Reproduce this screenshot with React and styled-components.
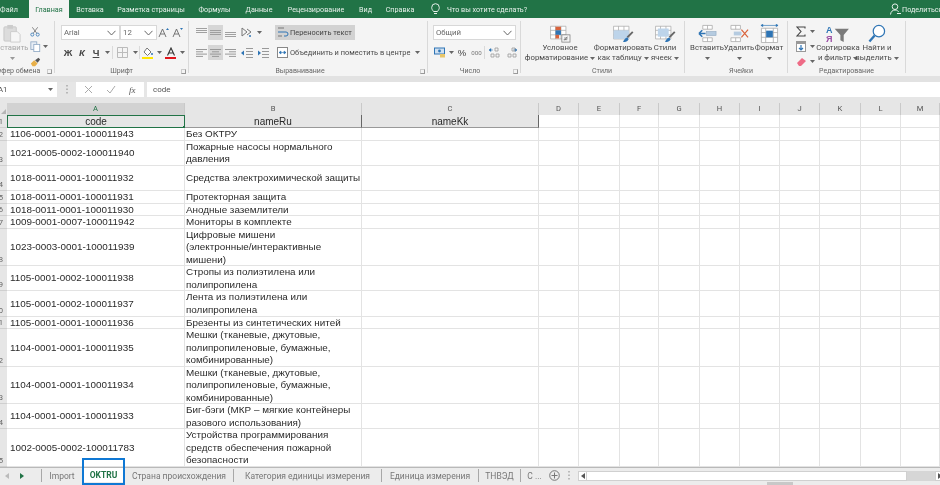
import React from "react";
import styled, { createGlobalStyle } from "styled-components";

const Global = createGlobalStyle`
  html, body { margin: 0; padding: 0; background: #fff; overflow: hidden; }
  * { box-sizing: border-box; }
`;
const UI = `Roboto, "Open Sans", "Liberation Sans", sans-serif`;
const SHEET = `"Liberation Sans", Arial, sans-serif`;

const Shell = styled.div`
  width: 940px; height: 485px; overflow: hidden; display: flex; flex-direction: column;
  background: #fff; font-family: ${UI}; filter: blur(0.3px);
`;
const TitleBar = styled.div`
  height: 18px; flex: none; background: #217346; display: flex; align-items: center; color: #e6f0ea; font-size: 7.2px;
`;
const MenuTab = styled.div`
  height: 18px; flex: none; display: flex; align-items: center; justify-content: center; white-space: nowrap; width: ${p => p.$w}px;
  margin-right: ${p => p.$mr || 0}px;
  ${p => p.$active && `background:#f4f4f4;color:#217346;`}
`;
const Tell = styled.div`display:flex;align-items:center;gap:7px;margin-left:10px;width:459px;flex:none;`;
const Share = styled.div`display:flex;align-items:center;gap:1px;white-space:nowrap;`;

const Ribbon = styled.div`
  height: 58px; flex: none; background: #f4f4f4; display: flex; color: #4a4a4a; font-size: 7.8px; overflow: hidden;
`;
const Group = styled.div`
  width: ${p => p.$w}px; flex: none; height: 52px; margin-top: 3px; border-right: 1px solid #d9d9d9;
  display: flex; flex-direction: column; position: relative;
`;
const GroupBody = styled.div`
  height: 42px; flex: none; padding: ${p => p.$top ?? 4}px 0 0 ${p => p.$pad || 0}px; display: flex;
`;
const GroupLabel = styled.div`
  height: 10px; margin-top: 3px; line-height: 10px; font-size: 7px; color: #666; white-space: nowrap; text-align: center;
  width: ${p => p.$w ? p.$w + "px" : "100%"}; margin-left: ${p => p.$ml || 0}px; flex: none;
`;
const Launcher = styled.span`
  position: absolute; right: 2px; bottom: -1px; width: 5px; height: 5px; border: 1px solid #999; border-top-color:#ccc; border-left-color:#ccc;
`;
const Stack = styled.div`display:flex;flex-direction:column;gap:${p => p.$gap ?? 5}px;margin-top:${p => p.$mt || 0}px;`;
const Line = styled.div`display:flex;align-items:center;height:15px;`;
const Slot = styled.div`
  width: ${p => p.$w}px; height: 15px; flex: none; display: flex; align-items: center; justify-content: center;
  ${p => p.$on && `background:#d6d6d6;`}
`;
const Letter = styled(Slot)`
  font-family: ${SHEET}; font-weight: ${p => p.$bold ? 700 : 400}; font-size: 9.5px; color: #444; font-style: ${p => p.$it ? "italic" : "normal"};
  text-decoration: ${p => p.$un ? "underline" : "none"};
`;
const Thousands = styled(Slot)`font-size: 6.2px; color: #777;`;
const Divider = styled.span`width:1px;height:13px;background:#dadada;flex:none;`;
const Select = styled.div`
  width: ${p => p.$w}px; height: 15px; flex: none; background: #fff; border: 1px solid #d8d8d8;
  display: flex; align-items: center; justify-content: space-between; padding: 0 3px 0 2px; font-size: 7.8px; color: #666;
`;
const WrapBtn = styled.div`
  width: 80px; height: 15px; flex: none; background: #d2d2d2; display: flex; align-items: center; gap: 1px; padding-left: 3px; white-space: nowrap; color: #444; font-size: 7.4px;
`;
const MergeBtn = styled.div`display:flex;align-items:center;gap:2px;height:15px;white-space:nowrap;font-size:7.45px;`;
const PasteCol = styled.div`
  width: 30px; margin-left: -3px; flex: none; display: flex; flex-direction: column; align-items: center; color: #a8a8a8; font-size: 7.6px; line-height: 10px; white-space: nowrap;
`;
const Big = styled.div`
  width: ${p => p.$w}px; flex: none; display: flex; flex-direction: column; align-items: center; text-align: center; line-height: 10px; white-space: nowrap;
`;
const BigIcon = styled.div`height: 19px; display:flex;align-items:center;justify-content:center;flex:none;`;
const CaretLine = styled.div`height:10px;display:flex;align-items:center;justify-content:center;gap:2px;`;

const Band = styled.div`height: 6px; flex: none; background: #e2e2e2;`;
const FormulaBar = styled.div`
  height: 21px; flex: none; background: #e6e6e6; display: flex; padding-bottom: 6px; color: #555; font-size: 7.8px;
`;
const NameBox = styled.div`
  width: 57px; background: #fff; display: flex; align-items: center; justify-content: space-between; padding: 0 4px 0 0; text-indent: -2px;
`;
const Dots = styled.div`width: 19px; display:flex; align-items:center; justify-content:center;`;
const FxBox = styled.div`
  width: 68px; background: #fff; display: flex; align-items: center; justify-content: space-around; padding: 0 2px; margin-right: 3px; color:#555;
`;
const FxText = styled.span`font-family:"Liberation Serif",serif;font-style:italic;font-size:9px;`;
const FormulaInput = styled.div`flex:1;background:#fff;display:flex;align-items:center;padding-left:6px;font-size:8px;`;

const COLS = "7px 178px 177px 177px 40px 41px 39px 41px 40px 40px 40px 41px 40px 39px";
const Sheet = styled.div`flex: 1; overflow: hidden; background: #fff; font-family: ${SHEET}; color: #2a2a2a;`;
const ColHeader = styled.div`
  display: grid; grid-template-columns: ${COLS}; height: 12px; background: #e6e6e6; font-size: 7.6px; color: #555; font-family:${UI};
`;
const ColCell = styled.div`
  display: flex; align-items: center; justify-content: center; border-right: 1px solid #c9c9c9; line-height: 12px;
  ${p => p.$sel && `background:#d2d2d2;color:#217346;`}
`;
const Corner = styled.div`position:relative;overflow:hidden;&::after{content:"";position:absolute;right:1px;bottom:1px;border-style:solid;border-width:0 0 5px 5px;border-color:transparent transparent #b5b5b5 transparent;}`;
const Row = styled.div`
  display: grid; grid-template-columns: ${COLS}; height: ${p => p.$h}px; overflow: hidden;
`;
const RowNum = styled.div`
  background: #e6e6e6; font-size: 7.6px; font-family:${UI}; color: #666; display: flex; align-items: flex-end; justify-content: flex-end;
  line-height: 10px; overflow: hidden; border-bottom: 1px solid #cfcfcf; padding-right: 4px;
`;
const Cell = styled.div`
  border-right: 1px solid #e3e3e3; border-bottom: 1px solid #e3e3e3; font-size: 9.9px; line-height: 12.5px;
  display: flex; align-items: center; padding-left: ${p => p.$pad}px; padding-top: 1px; white-space: pre-line; overflow: hidden;
`;
const HeadCell = styled.div`
  background: #e6e6e6; border-right: 1px solid #666; border-bottom: 1px solid #999; font-size: 10px; display: flex; align-items: center; justify-content: center; position:relative;
  ${p => p.$sel && `border:1px solid #217346;&::after{content:"";position:absolute;right:-2px;bottom:-2px;width:3px;height:3px;background:#217346;}`}
`;

const SheetBar = styled.div`
  height: 18px; flex: none; background: #ececec; border-top: 1px solid #b9b9b9; display: flex; color: #777; font-size: 8.5px; position: relative;
`;
const Nav = styled.div`width: 42px; flex: none; height: 13px; display: flex; align-items: center; gap: 11px; padding-left: 5px; border-right: 1px solid #a8a8a8; margin-top:1px;`;
const SheetTab = styled.div`
  height: 13px; flex: none; margin-top:1px; display:flex; align-items:center; justify-content:center; white-space:nowrap; width:${p => p.$w}px;
  ${p => p.$sep && `border-right:1px solid #a8a8a8;`}
  ${p => p.$active && `
    position:relative;background:#fff;color:#217346;font-weight:700;height:14px;margin-top:0;
    &::after{content:"";position:absolute;left:0;right:0;top:-10px;bottom:-3px;border:2.5px solid #0f78d4;}
  `}
`;
const SheetEnd = styled.div`display:flex;flex:none;align-items:center;height:13px;margin-top:1px;`;
const ScrollBtn = styled.div`width:9px;height:10px;flex:none;background:#fff;border:1px solid #d0d0d0;display:flex;align-items:center;justify-content:center;`;
const Track = styled.div`width:320px;height:10px;flex:none;background:#fff;border:1px solid #d0d0d0;border-left:none;`;
const Thumb = styled.div`width:28px;height:10px;flex:none;background:#d6d6d6;`;
const StatusGrip = styled.span`position:absolute;left:767px;bottom:0;width:26px;height:3px;background:#c8c8c8;`;

const Caret = ({ c = "#666" }) => (
  <svg width="5" height="3" viewBox="0 0 5 3"><path d="M0 0h5L2.500 3z" fill={c} /></svg>
);
const Chev = () => (
  <svg width="9" height="6" viewBox="0 0 9 6"><path d="M.5.8 4.500 5l4-4.200" fill="none" stroke="#666" strokeWidth="1" /></svg>
);
const Bars = ({ v }) => {
  const y = v === "top" ? [1, 3, 5] : v === "mid" ? [3, 5, 7] : [5, 7, 9];
  return <svg width="11" height="11" viewBox="0 0 11 11">{y.map(n => <rect key={n} y={n} width="11" height="1" fill="#a0a0a0" />)}</svg>;
};
const Just = ({ a }) => {
  const r = [[0, 11], [a === "l" ? 0 : a === "c" ? 2 : 4, 7], [0, 11], [a === "l" ? 0 : a === "c" ? 2 : 4, 7]];
  return <svg width="11" height="10" viewBox="0 0 11 10">{r.map(([x, w], i) => <rect key={i} x={x} y={1 + i * 2.3} width={w} height="1" fill="#999" />)}</svg>;
};
const Indent = ({ flip }) => (
  <svg width="12" height="10" viewBox="0 0 12 10">
    {[0, 3, 6, 9].map(y => <rect key={y} x="5" y={y} width="7" height="1" fill="#999" />)}
    <path d={flip ? "M4 5 1 2.500v5z" : "M0 5l3-2.500v5z"} fill="#2f75b5" />
  </svg>
);
const PasteIcon = () => (
  <svg width="19" height="19" viewBox="0 0 20 20">
    <rect x="1" y="3" width="13" height="15" rx="1" fill="#dcdcdc" stroke="#c8c8c8" />
    <rect x="4.500" y="1" width="6" height="4" fill="#cccccc" />
    <path d="M8 8h7l3 3v8H8z" fill="#f6f6f6" stroke="#cccccc" />
  </svg>
);
const Scissors = () => (
  <svg width="10" height="11" viewBox="0 0 13 13">
    <path d="M3 1l6 8M10 1 4 9" stroke="#666" fill="none" />
    <circle cx="3" cy="10.500" r="2" fill="none" stroke="#2f75b5" /><circle cx="10" cy="10.500" r="2" fill="none" stroke="#2f75b5" />
  </svg>
);
const CopyIcon = () => (
  <svg width="11" height="11" viewBox="0 0 13 13">
    <rect x="1" y="1" width="7" height="9" fill="#e8eef5" stroke="#8fa9c5" /><rect x="4.500" y="4" width="7" height="8.500" fill="#fff" stroke="#8fa9c5" />
  </svg>
);
const Brush = () => (
  <svg width="11" height="11" viewBox="0 0 13 13">
    <path d="M1 9l4-4 4 4-3 3H3z" fill="#e8b04a" /><path d="M6 5l4-3 2 2-3 4z" fill="#555" />
  </svg>
);
const AUp = ({ down }) => (
  <svg width="12" height="11" viewBox="0 0 12 11">
    <path d="M1 10 4.500 2 8 10M2.500 7h4" fill="none" stroke="#666" strokeWidth=".9" />
    <path d={down ? "M8 1h3L9.500 3z" : "M8 3h3L9.500 1z"} fill="#2f75b5" />
  </svg>
);
const Borders = () => (
  <svg width="11" height="11" viewBox="0 0 11 11"><path d="M.5.5h10v10H.5zM5.500.5v10M.5 5.500h10" fill="none" stroke="#bbb" /></svg>
);
const Fill = () => (
  <svg width="12" height="12" viewBox="0 0 12 12">
    <path d="M5 1l4 4-3.500 3.500L2 5z" fill="#fff" stroke="#777" /><circle cx="10" cy="7" r="1" fill="#2f75b5" />
    <rect y="10" width="11" height="2" fill="#ffe600" />
  </svg>
);
const FontColor = () => (
  <svg width="12" height="12" viewBox="0 0 12 12">
    <path d="M2.500 8.500 6 1l3.500 7.500M4 6h4" fill="none" stroke="#333" strokeWidth="1.100" /><rect y="10" width="11" height="2" fill="#e0151c" />
  </svg>
);
const Orient = () => (
  <svg width="11" height="11" viewBox="0 0 11 11"><path d="M1 1l5 4-5 4zM6 2l4 3-4 3" fill="none" stroke="#777" /><circle cx="9" cy="9" r="1" fill="#2f75b5" /></svg>
);
const WrapIco = () => (
  <svg width="11" height="11" viewBox="0 0 11 11"><path d="M0 1h6M0 9h4" stroke="#777" /><path d="M0 5h8a2 2 0 0 1 0 4H6" fill="none" stroke="#2f75b5" /></svg>
);
const MergeIco = () => (
  <svg width="11" height="11" viewBox="0 0 11 11"><rect x=".5" y=".5" width="10" height="10" fill="#fff" stroke="#888" /><path d="M2 5.500h7M2 5.500l2-1.500v3zM9 5.500 7 4v3z" stroke="#2f75b5" fill="#2f75b5" strokeWidth=".6" /></svg>
);
const Currency = () => (
  <svg width="12" height="11" viewBox="0 0 12 11"><rect x=".5" y="1" width="10" height="6" fill="#cfe0f1" stroke="#2f75b5" /><circle cx="5.500" cy="4" r="1.400" fill="#2f75b5" /><rect x="6" y="7" width="5" height="3.500" fill="#e8c66a" /></svg>
);
const DecIco = ({ up }) => (
  <svg width="11" height="11" viewBox="0 0 11 11">
    <path d={up ? "M0 3h4M0 3l2-1.500v3z" : "M7 3h4M11 3 9 1.500v3z"} stroke="#2f75b5" fill="#2f75b5" strokeWidth=".5" />
    <path d="M6 1h3v3H6zM2 7h3v3H2zM7 7h3v3H7z" fill="none" stroke="#999" strokeWidth=".8" />
  </svg>
);
const Bulb = () => (
  <svg width="9" height="12" viewBox="0 0 9 12"><path d="M2.500 8.500C1.500 7 .7 6.200.7 4.500a3.800 3.800 0 0 1 7.600 0c0 1.700-.8 2.500-1.800 4zM3 10.500h3" fill="none" stroke="#e6f0ea" /></svg>
);
const Person = () => (
  <svg width="11" height="12" viewBox="0 0 11 12"><circle cx="5" cy="3.700" r="2.800" fill="none" stroke="#e6f0ea" /><path d="M.5 11.500C.8 8.600 2.600 7 5 7s3 1 3.600 2M7 10.500h4" fill="none" stroke="#e6f0ea" /></svg>
);
const Grid3 = ({ children }) => (
  <svg width="21" height="19" viewBox="0 0 23 21">
    <path d="M.5 2.500h17v14H.5zM6 2.500v14M12 2.500v14M.5 7h17M.5 12h17" fill="#fff" stroke="#a8a8a8" strokeWidth=".8" />
    {children}
  </svg>
);
const CondIco = () => (
  <Grid3>
    <rect x="6" y="3" width="6" height="4" fill="#d9633c" /><rect x="6" y="7" width="6" height="5" fill="#2f75b5" /><rect x="6" y="12" width="4" height="4" fill="#d9633c" />
    <rect x="13" y="12" width="9" height="8" fill="#f6f6f6" stroke="#777" strokeWidth=".8" /><path d="M16 18l3-4M15.500 15.500h4M15 17.300h4" stroke="#555" strokeWidth=".7" />
  </Grid3>
);
const TableIco = () => (
  <Grid3>
    <rect x=".5" y="7" width="17" height="9.500" fill="#bdd4ea" />
    <path d="M15 14l6-6 1.500 1.500-6 6z" fill="#666" /><path d="M11 20c1-3 3-5 5-5l1 2c-1 2-3 3-6 3z" fill="#2f75b5" />
  </Grid3>
);
const StyleIco = () => (
  <Grid3>
    <rect x="3" y="5" width="12" height="9" fill="#bdd4ea" />
    <path d="M15 14l6-6 1.500 1.500-6 6z" fill="#666" /><path d="M11 20c1-3 3-5 5-5l1 2c-1 2-3 3-6 3z" fill="#2f75b5" />
  </Grid3>
);
const InsertIco = () => (
  <svg width="19" height="19" viewBox="0 0 20 20">
    <path d="M5 1.500h10v4H5zM5 14.500h10v4H5zM10 1.500v4M10 14.500v4" fill="#fff" stroke="#a8a8a8" strokeWidth=".8" />
    <rect x="9" y="8" width="10" height="4" fill="#b5cbe0" stroke="#8aa5bf" strokeWidth=".6" />
    <path d="M1 10h7M1 10l3.500-3.500M1 10l3.500 3.500" stroke="#2f75b5" strokeWidth="1.600" fill="none" />
  </svg>
);
const DeleteIco = () => (
  <svg width="19" height="19" viewBox="0 0 20 20">
    <path d="M1 1.500h10v4H1zM1 14.500h10v4H1zM6 1.500v4M6 14.500v4" fill="#fff" stroke="#a8a8a8" strokeWidth=".8" />
    <rect x="4" y="8" width="8" height="4" fill="#b5cbe0" />
    <path d="M12 6l7 8M19 6l-7 8" stroke="#d9633c" strokeWidth="1.300" />
  </svg>
);
const FormatIco = () => (
  <svg width="19" height="19" viewBox="0 0 20 20">
    <path d="M1 1.500h18M1 1.500l2-1.200v2.400zM19 1.500 17 .3v2.400z" stroke="#2f75b5" fill="#2f75b5" strokeWidth=".7" />
    <path d="M1.500 4.500h17v15h-17zM6 4.500v15M14 4.500v15M1.500 9h17M1.500 14h17" fill="#fff" stroke="#a8a8a8" strokeWidth=".8" />
    <rect x="6.500" y="7" width="7" height="7" fill="#2f75b5" />
  </svg>
);
const Sigma = () => (
  <svg width="10" height="11" viewBox="0 0 10 11"><path d="M9 2.500V1H1l4 4.500L1 10h8V8.500" fill="none" stroke="#444" strokeWidth="1.100" /></svg>
);
const FillDown = () => (
  <svg width="10" height="11" viewBox="0 0 10 11"><rect x=".5" y=".5" width="9" height="10" fill="#fff" stroke="#999" /><rect x=".5" y=".5" width="9" height="2.500" fill="#999" /><path d="M5 4v5M3 7l2 2 2-2" stroke="#2f75b5" fill="none" strokeWidth="1.200" /></svg>
);
const Eraser = () => (
  <svg width="11" height="10" viewBox="0 0 11 10"><path d="M1 6l5-5 4 3-5 5H3z" fill="#ee6b86" /></svg>
);
const SortIco = () => (
  <svg width="26" height="19" viewBox="0 0 27 20">
    <text x="1" y="9" fontFamily="Liberation Sans" fontWeight="700" fontSize="9.500" fill="#2f75b5">А</text>
    <text x="1" y="19" fontFamily="Liberation Sans" fontWeight="700" fontSize="9.500" fill="#9b4fa5">Я</text>
    <path d="M10 5h15l-5.500 6.500V19L16 17v-5.500z" fill="#7a7a7a" />
  </svg>
);
const FindIco = () => (
  <svg width="18" height="19" viewBox="0 0 19 20"><circle cx="11.500" cy="7.500" r="6" fill="#fff" stroke="#2f75b5" strokeWidth="1.300" /><path d="M7 12 1.500 18.500" stroke="#2f75b5" strokeWidth="2.400" /></svg>
);
const X = () => (<svg width="9" height="9" viewBox="0 0 9 9"><path d="M1 1l7 7M8 1 1 8" stroke="#aaa" /></svg>);
const Check = () => (<svg width="10" height="9" viewBox="0 0 10 9"><path d="M1 5l3 3 5-7" stroke="#aaa" fill="none" /></svg>);
const Plus = () => (<svg width="11" height="11" viewBox="0 0 11 11"><circle cx="5.500" cy="5.500" r="4.800" fill="none" stroke="#777" /><path d="M5.500 2.500v6M2.500 5.500h6" stroke="#777" /></svg>);
const VDots = () => (<svg width="2" height="9" viewBox="0 0 2 9"><path d="M1 0v1.500M1 3.500V5M1 7v1.500" stroke="#999" strokeWidth="1.200" /></svg>);
const Tri = ({ left, c }) => (<svg width="4" height="6" viewBox="0 0 4 6"><path d={left ? "M4 0v6L0 3z" : "M0 0v6l4-3z"} fill={c} /></svg>);

const rows = [
  [13, "1106-0001-0001-100011943", "Без ОКТРУ"],
  [24.5, "1021-0005-0002-100011940", "Пожарные насосы нормального\nдавления"],
  [25.5, "1018-0011-0001-100011932", "Средства электрохимической защиты"],
  [12.5, "1018-0011-0001-100011931", "Протекторная защита"],
  [12.5, "1018-0011-0001-100011930", "Анодные заземлители"],
  [12.5, "1009-0001-0007-100011942", "Мониторы в комплекте"],
  [37.5, "1023-0003-0001-100011939", "Цифровые мишени\n(электронные/интерактивные\nмишени)"],
  [25, "1105-0001-0002-100011938", "Стропы из полиэтилена или\nполипропилена"],
  [25.5, "1105-0001-0002-100011937", "Лента из полиэтилена или\nполипропилена"],
  [12.5, "1105-0001-0001-100011936", "Брезенты из синтетических нитей"],
  [37.5, "1104-0001-0001-100011935", "Мешки (тканевые, джутовые,\nполипропиленовые, бумажные,\nкомбинированные)"],
  [37.5, "1104-0001-0001-100011934", "Мешки (тканевые, джутовые,\nполипропиленовые, бумажные,\nкомбинированные)"],
  [25, "1104-0001-0001-100011933", "Биг-бэги (МКР – мягкие контейнеры\nразового использования)"],
  [37.5, "1002-0005-0002-100011783", "Устройства программирования\nсредств обеспечения пожарной\nбезопасности"],
];
const letters = ["A", "B", "C", "D", "E", "F", "G", "H", "I", "J", "K", "L", "M"];
const empties = Array.from({ length: 10 });

export default function App() {
  return (
    <Shell>
      <Global />
      <TitleBar>
        <MenuTab $w={18} $mr={11}>Файл</MenuTab>
        <MenuTab $w={40} $active>Главная</MenuTab>
        <MenuTab $w={42}>Вставка</MenuTab>
        <MenuTab $w={80}>Разметка страницы</MenuTab>
        <MenuTab $w={47}>Формулы</MenuTab>
        <MenuTab $w={42}>Данные</MenuTab>
        <MenuTab $w={72}>Рецензирование</MenuTab>
        <MenuTab $w={27}>Вид</MenuTab>
        <MenuTab $w={42}>Справка</MenuTab>
        <Tell><Bulb />Что вы хотите сделать?</Tell>
        <Share><Person />Поделиться</Share>
      </TitleBar>

      <Ribbon>
        <Group $w={55}>
          <GroupBody $top={3}>
            <PasteCol>
              <BigIcon><PasteIcon /></BigIcon>
              Вставить
              <CaretLine><Caret c="#999" /></CaretLine>
            </PasteCol>
            <Stack $gap={0}>
              <Line><Slot $w={16}><Scissors /></Slot></Line>
              <Line><Slot $w={16}><CopyIcon /></Slot><Caret /></Line>
              <Line><Slot $w={16}><Brush /></Slot></Line>
            </Stack>
          </GroupBody>
          <GroupLabel $w={50} $ml={-8}>Буфер обмена</GroupLabel>
          <Launcher />
        </Group>

        <Group $w={134}>
          <GroupBody $pad={6}>
            <Stack>
              <Line>
                <Select $w={59}>Arial<Chev /></Select>
                <Select $w={37}>12<Chev /></Select>
                <Slot $w={14}><AUp /></Slot>
                <Slot $w={14}><AUp down /></Slot>
              </Line>
              <Line>
                <Letter $w={14} $bold>Ж</Letter>
                <Letter $w={14} $bold $it>К</Letter>
                <Letter $w={14} $bold $un>Ч</Letter>
                <Slot $w={9}><Caret /></Slot>
                <Divider />
                <Slot $w={18}><Borders /></Slot>
                <Slot $w={8}><Caret /></Slot>
                <Divider />
                <Slot $w={16}><Fill /></Slot>
                <Slot $w={7}><Caret /></Slot>
                <Slot $w={15}><FontColor /></Slot>
                <Slot $w={8}><Caret /></Slot>
              </Line>
            </Stack>
          </GroupBody>
          <GroupLabel>Шрифт</GroupLabel>
          <Launcher />
        </Group>

        <Group $w={239}>
          <GroupBody $pad={5}>
            <Stack>
              <Line>
                <Slot $w={14}><Bars v="top" /></Slot>
                <Slot $w={15} $on><Bars v="mid" /></Slot>
                <Slot $w={14}><Bars v="bot" /></Slot>
                <Slot $w={18}><Orient /></Slot>
                <Slot $w={8}><Caret /></Slot>
                <Slot $w={12} />
                <WrapBtn><WrapIco />Переносить текст</WrapBtn>
              </Line>
              <Line>
                <Slot $w={14}><Just a="l" /></Slot>
                <Slot $w={15} $on><Just a="c" /></Slot>
                <Slot $w={14}><Just a="r" /></Slot>
                <Slot $w={20}><Indent /></Slot>
                <Slot $w={12}><Indent flip /></Slot>
                <Slot $w={8} />
                <MergeBtn><MergeIco />Объединить и поместить в центре<Slot $w={10}><Caret /></Slot></MergeBtn>
              </Line>
            </Stack>
          </GroupBody>
          <GroupLabel $w={60} $ml={81}>Выравнивание</GroupLabel>
          <Launcher />
        </Group>

        <Group $w={93}>
          <GroupBody $pad={5}>
            <Stack>
              <Line><Select $w={83}>Общий<Chev /></Select></Line>
              <Line>
                <Slot $w={14}><Currency /></Slot>
                <Slot $w={8}><Caret /></Slot>
                <Letter $w={14}>%</Letter>
                <Thousands $w={15}>000</Thousands>
                <Divider />
                <Slot $w={19}><DecIco up /></Slot>
                <Slot $w={14}><DecIco /></Slot>
              </Line>
            </Stack>
          </GroupBody>
          <GroupLabel $w={84}>Число</GroupLabel>
          <Launcher />
        </Group>

        <Group $w={164}>
          <GroupBody $top={3}>
            <Big $w={78}><BigIcon><CondIco /></BigIcon>Условное<CaretLine>форматирование <Caret /></CaretLine></Big>
            <Big $w={48}><BigIcon><TableIco /></BigIcon>Форматировать<CaretLine>как таблицу <Caret /></CaretLine></Big>
            <Big $w={36}><BigIcon><StyleIco /></BigIcon>Стили<CaretLine>ячеек <Caret /></CaretLine></Big>
          </GroupBody>
          <GroupLabel $w={162}>Стили</GroupLabel>
        </Group>

        <Group $w={103}>
          <GroupBody $pad={5} $top={3}>
            <Big $w={34}><BigIcon><InsertIco /></BigIcon>Вставить<CaretLine><Caret /></CaretLine></Big>
            <Big $w={30}><BigIcon><DeleteIco /></BigIcon>Удалить<CaretLine><Caret /></CaretLine></Big>
            <Big $w={30}><BigIcon><FormatIco /></BigIcon>Формат<CaretLine><Caret /></CaretLine></Big>
          </GroupBody>
          <GroupLabel $w={112}>Ячейки</GroupLabel>
        </Group>

        <Group $w={118}>
          <GroupBody $pad={6} $top={3}>
            <Stack $gap={0}>
              <Line><Slot $w={14}><Sigma /></Slot><Slot $w={8}><Caret /></Slot></Line>
              <Line><Slot $w={14}><FillDown /></Slot><Slot $w={8}><Caret /></Slot></Line>
              <Line><Slot $w={14}><Eraser /></Slot><Slot $w={8}><Caret /></Slot></Line>
            </Stack>
            <Big $w={44}><BigIcon><SortIco /></BigIcon>Сортировка<CaretLine>и фильтр <Caret /></CaretLine></Big>
            <Big $w={34}><BigIcon><FindIco /></BigIcon>Найти и<CaretLine>выделить <Caret /></CaretLine></Big>
          </GroupBody>
          <GroupLabel>Редактирование</GroupLabel>
        </Group>
      </Ribbon>

      <Band />
      <FormulaBar>
        <NameBox>A1<Caret /></NameBox>
        <Dots><VDots /></Dots>
        <FxBox><X /><Check /><FxText>fx</FxText></FxBox>
        <FormulaInput>code</FormulaInput>
      </FormulaBar>

      <Sheet>
        <ColHeader>
          <Corner />
          {letters.map((l, i) => <ColCell key={l} $sel={i === 0}>{l}</ColCell>)}
        </ColHeader>
        <Row $h={13}>
          <RowNum>1</RowNum>
          <HeadCell $sel>code</HeadCell>
          <HeadCell>nameRu</HeadCell>
          <HeadCell>nameKk</HeadCell>
          {empties.map((_, i) => <Cell key={i} />)}
        </Row>
        {rows.map(([h, a, b], i) => (
          <Row key={a + i} $h={h}>
            <RowNum>{i + 2}</RowNum>
            <Cell $pad={3}>{a}</Cell>
            <Cell $pad={1}>{b}</Cell>
            <Cell />
            {empties.map((_, k) => <Cell key={k} />)}
          </Row>
        ))}
      </Sheet>

      <SheetBar>
        <Nav><Tri left c="#bbb" /><Tri c="#217346" /></Nav>
        <SheetTab $w={40}>Import</SheetTab>
        <SheetTab $w={43} $active>OKTRU</SheetTab>
        <SheetTab $w={109} $sep>Страна происхождения</SheetTab>
        <SheetTab $w={148} $sep>Категория единицы измерения</SheetTab>
        <SheetTab $w={97} $sep>Единица измерения</SheetTab>
        <SheetTab $w={42} $sep>ТНВЭД</SheetTab>
        <SheetTab $w={27}>С ...</SheetTab>
        <SheetEnd>
          <Slot $w={12}><Plus /></Slot>
          <Slot $w={18}><VDots /></Slot>
          <ScrollBtn><Tri left c="#555" /></ScrollBtn>
          <Track />
          <Thumb />
          <ScrollBtn><Tri c="#555" /></ScrollBtn>
        </SheetEnd>
        <StatusGrip />
      </SheetBar>
    </Shell>
  );
}
